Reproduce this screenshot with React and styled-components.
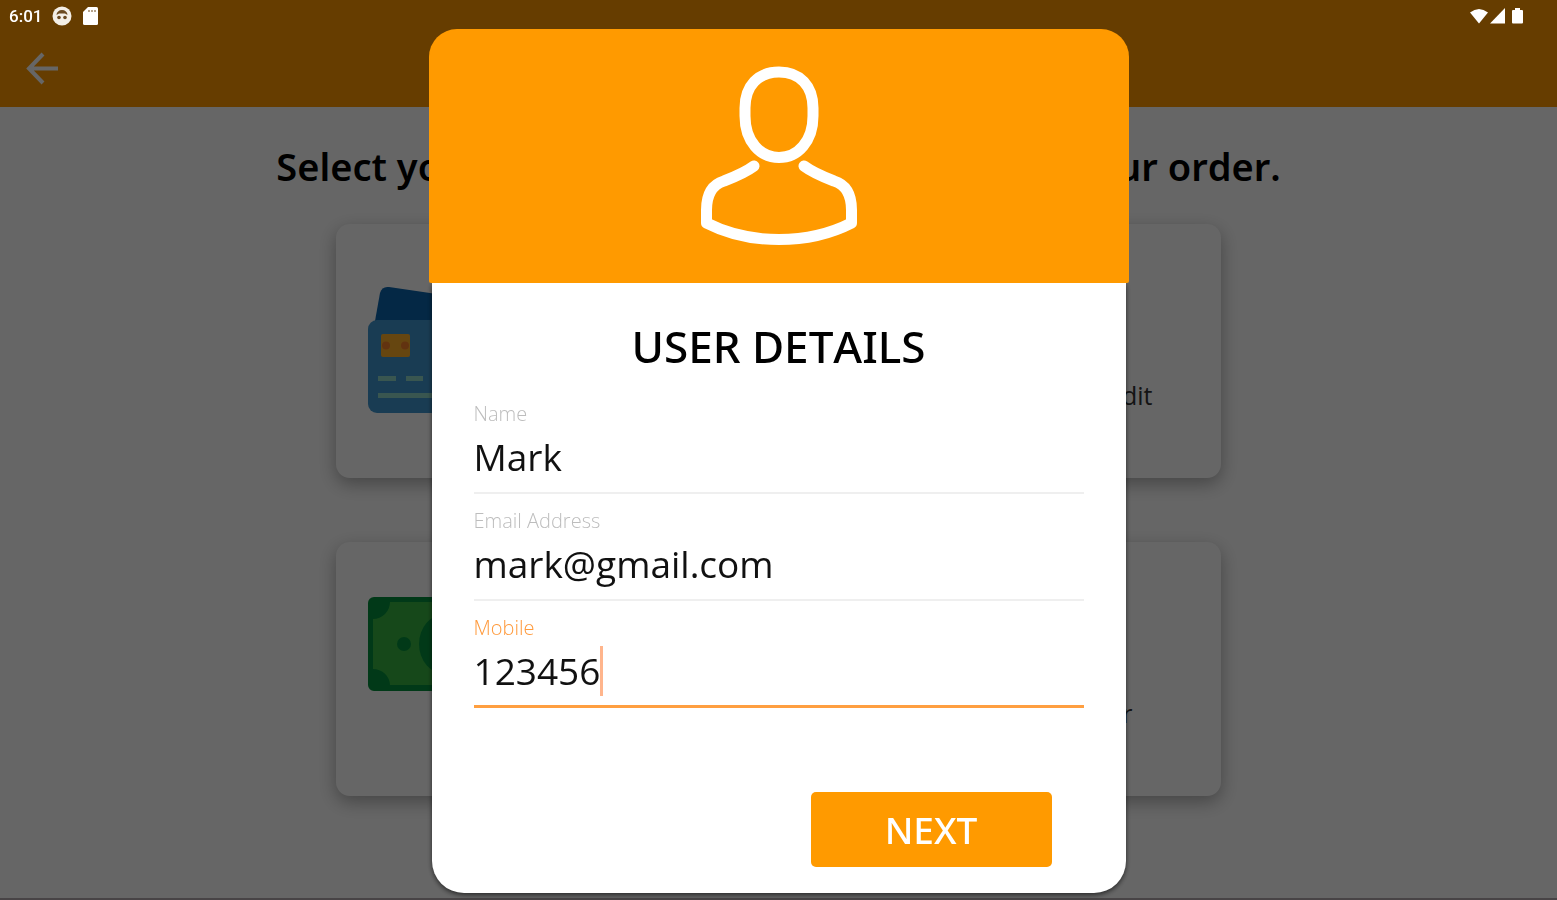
import React, { useState } from "react";
import styled, { createGlobalStyle, css } from "styled-components";

const GlobalStyle = createGlobalStyle`
  *, *::before, *::after { box-sizing: border-box; }
  body {
    margin: 0;
    background: #fff;
    color: #000;
    font-family: "Open Sans", "Noto Sans", sans-serif;
    font-kerning: none;
  }
`;

const brand = "#ff9a00";

const Page = styled.div`
  display: flex;
  flex-direction: column;
  min-height: 100vh;
  border-bottom: 2px solid #b4aaae;
`;

const Header = styled.header`
  background: ${brand};
`;

const StatusBar = styled.div`
  position: relative;
  z-index: 2;
  display: flex;
  align-items: center;
  justify-content: space-between;
  height: 31px;
  padding: 0 32px 0 9px;
  color: #fff;
`;

const StatusGroup = styled.div`
  display: flex;
  align-items: center;
  gap: ${(p) => p.$gap}px;
`;

const Clock = styled.span`
  font: 500 17px/20px Roboto, sans-serif;
`;

const AppBar = styled.div`
  display: flex;
  align-items: center;
  height: 76px;
  padding: 0 24px;
`;

const BackButton = styled.button`
  display: flex;
  padding: 0;
  border: 0;
  background: none;
  color: #fff;
`;

const Main = styled.main`
  display: flex;
  flex-direction: column;
  align-items: center;
  padding: 35px 24px 0;
`;

const Heading = styled.h1`
  margin: 0 0 34px;
  font-size: 38px;
  line-height: 48px;
  font-weight: 600;
  font-family: "Noto Sans", "Open Sans", sans-serif;
  text-align: center;
  white-space: nowrap;
`;

const Options = styled.div`
  display: flex;
  flex-direction: column;
  gap: 64px;
  width: 100%;
  max-width: 885px;
`;

const OptionCard = styled.article`
  display: flex;
  align-items: center;
  min-height: 254px;
  padding: 32px;
  border-radius: 14px;
  background: #fff;
  box-shadow: 0 6px 18px rgba(0, 0, 0, 0.32);
`;

const OptionText = styled.p`
  flex: 1;
  align-self: flex-end;
  margin: 0;
  padding-bottom: 35px;
  color: #333;
  font-size: 25px;
  line-height: 32px;
  text-align: center;
  white-space: nowrap;
`;

const Scrim = styled.div`
  position: fixed;
  inset: 0;
  z-index: 1;
  display: flex;
  align-items: flex-start;
  justify-content: center;
  padding-top: 29px;
  background: rgba(0, 0, 0, 0.6);
  overflow: auto;
`;

const Dialog = styled.section`
  display: flex;
  flex-direction: column;
  width: 100%;
  max-width: 700px;
`;

const DialogBanner = styled.div`
  position: relative;
  display: flex;
  justify-content: center;
  height: 254px;
  padding-top: 37px;
  border-radius: 28px 28px 2px 2px;
  background: ${brand};
`;

const DialogForm = styled.form`
  display: flex;
  flex-direction: column;
  margin: 0 3px;
  padding: 33px 42px 26px;
  border-radius: 0 0 32px 32px;
  background: #fff;
  box-shadow: 0 2px 5px rgba(0, 0, 0, 0.6);
`;

const DialogTitle = styled.h2`
  margin: 0 0 26px;
  font-size: 44px;
  line-height: 60px;
  font-weight: 500;
  font-family: "Noto Sans", "Open Sans", sans-serif;
  text-align: center;
`;

const Fields = styled.div`
  display: flex;
  flex-direction: column;
  gap: 15px;
`;

const Field = styled.div`
  display: flex;
  flex-direction: column;
`;

const FieldLabel = styled.label`
  color: ${(p) => (p.$active ? "#ff9a3c" : "#bdbdbd")};
  font-size: 20px;
  line-height: 24px;
  font-weight: 300;
`;

const InputWrap = styled.div`
  position: relative;
  font-size: 37px;
`;

const Input = styled.input`
  display: block;
  width: 100%;
  height: 68px;
  padding: 0 0 5px;
  border: 0;
  border-bottom: 2px solid #efefef;
  border-radius: 0;
  outline: 0;
  background: none;
  color: #111;
  caret-color: transparent;
  font: inherit;
  font-kerning: none;
  ${(p) =>
    p.$active &&
    css`
      border-bottom: 3px solid #ff9f40;
    `}
`;

const Caret = styled.span`
  position: absolute;
  top: 6px;
  left: ${(p) => p.$chars}ch;
  width: 3px;
  height: 50px;
  background: #ffb58c;
`;

const NextButton = styled.button`
  align-self: flex-end;
  width: 241px;
  height: 75px;
  margin: 84px 32px 0 0;
  padding: 0;
  border: 0;
  border-radius: 5px;
  background: ${brand};
  color: #fff;
  font: 500 37px/48px "Noto Sans", "Open Sans", sans-serif;
`;

const FaceIcon = () => (
  <svg width="20" height="20" viewBox="0 0 20 20" aria-hidden="true">
    <circle cx="10" cy="10" r="9.5" fill="#f4efe6" />
    <path d="M4.500 9A5.500 5 0 0 1 15.500 9L13 7.500H7Z" fill="#6b4a20" />
    <circle cx="7" cy="11.500" r="1.800" fill="#6b4a20" />
    <circle cx="13" cy="11.500" r="1.800" fill="#6b4a20" />
  </svg>
);

const StorageIcon = () => (
  <svg width="17" height="20" viewBox="0 0 17 20" aria-hidden="true">
    <path d="M6 1H14.500Q16 1 16 2.500V17.500Q16 19 14.500 19H2.500Q1 19 1 17.500V6Z" fill="#fff" />
    <path d="M7 4V6M10 4V6M13 4V6" stroke="#8f7350" strokeWidth="1.300" />
  </svg>
);

const SignalIcons = () => (
  <svg width="56" height="20" viewBox="0 0 56 20" fill="#fff" aria-hidden="true">
    <path d="M1 6.500Q10 -0.500 19 6.500L10 17.500Z" />
    <path d="M36 2V17.500H21Z" />
    <path d="M46 2H51V4H53Q54 4 54 5V16.500Q54 17.500 53 17.500H44Q43 17.500 43 16.500V5Q43 4 44 4H46Z" />
  </svg>
);

const ArrowIcon = () => (
  <svg width="36" height="36" viewBox="0 0 36 36" fill="none" stroke="currentColor" strokeWidth="4" aria-hidden="true">
    <path d="M34 17.500H5M19 3L5 17.500L19 32" />
  </svg>
);

const UserIcon = () => (
  <svg width="158" height="180" viewBox="0 0 158 180" fill="none" stroke="#fff" strokeWidth="11" strokeLinecap="round" strokeLinejoin="round" aria-hidden="true">
    <path d="M79 6C100 6 113 20 113 42V50C113 75 98 91.500 79 91.500C60 91.500 45 75 45 50V42C45 20 58 6 79 6Z" />
    <path d="M54 100C46 106 37 110 24 115C11 119 6.500 130 6.500 144V157C28 168 53 173.500 79 173.500S130 168 151.500 157V144C151.500 130 147 119 134 115C121 110 112 106 104 100" />
  </svg>
);

const CreditCardIcon = () => (
  <svg width="144" height="144" viewBox="0 0 144 144" aria-hidden="true">
    <path d="M7 42L12 14Q14 7 21 8L130 24Q136 25 136 32V60H7Z" fill="#0a64ac" />
    <rect y="41" width="144" height="93" rx="9" fill="#4097d0" />
    <rect x="13" y="55" width="29" height="23" rx="2" fill="#ffb02a" />
    <circle cx="18" cy="66.500" r="4" fill="#f5802a" />
    <circle cx="37" cy="66.500" r="4" fill="#f5802a" />
    <path d="M10 99.500H28M38 99.500H55M10 116.500H90" stroke="#8fd8c8" strokeWidth="5" />
  </svg>
);

const CashIcon = () => (
  <svg width="144" height="144" viewBox="0 0 144 144" aria-hidden="true">
    <rect width="144" height="94" rx="6" fill="#03903c" />
    <path d="M22 5H122A17 17 0 0 0 139 22V72A17 17 0 0 0 122 88H22A17 17 0 0 0 5 72V22A17 17 0 0 0 22 5Z" fill="#38b542" />
    <circle cx="36" cy="47" r="7" fill="#03903c" />
    <ellipse cx="77" cy="47" rx="26" ry="30" fill="#03903c" />
  </svg>
);

const options = [
  { id: "card", Icon: CreditCardIcon, text: "Pay with Visa or Mastercard, whether debit or credit" },
  { id: "cash", Icon: CashIcon, text: "Pay with cash when you collect from the counter" },
];

const fields = [
  { id: "name", label: "Name", type: "text" },
  { id: "email", label: "Email Address", type: "email" },
  { id: "mobile", label: "Mobile", type: "tel" },
];

export default function App() {
  const [values, setValues] = useState({ name: "Mark", email: "mark@gmail.com", mobile: "123456" });
  const [active, setActive] = useState("mobile");

  return (
    <>
      <GlobalStyle />
      <Page>
        <Header>
          <StatusBar>
            <StatusGroup $gap={10}>
              <Clock>6:01</Clock>
              <FaceIcon />
              <StorageIcon />
            </StatusGroup>
            <SignalIcons />
          </StatusBar>
          <AppBar>
            <BackButton type="button" aria-label="Back">
              <ArrowIcon />
            </BackButton>
          </AppBar>
        </Header>
        <Main>
          <Heading>Select your payment method then confirm your order.</Heading>
          <Options>
            {options.map(({ id, Icon, text }) => (
              <OptionCard key={id}>
                <Icon />
                <OptionText>{text}</OptionText>
              </OptionCard>
            ))}
          </Options>
        </Main>
      </Page>
      <Scrim>
        <Dialog role="dialog" aria-modal="true" aria-labelledby="dialog-title">
          <DialogBanner>
            <UserIcon />
          </DialogBanner>
          <DialogForm onSubmit={(e) => e.preventDefault()}>
            <DialogTitle id="dialog-title">USER DETAILS</DialogTitle>
            <Fields>
              {fields.map(({ id, label, type }) => (
                <Field key={id}>
                  <FieldLabel htmlFor={id} $active={active === id}>
                    {label}
                  </FieldLabel>
                  <InputWrap>
                    <Input
                      id={id}
                      type={type}
                      value={values[id]}
                      $active={active === id}
                      onFocus={() => setActive(id)}
                      onChange={(e) => setValues({ ...values, [id]: e.target.value })}
                    />
                    {id === "mobile" && active === id && <Caret $chars={values[id].length} />}
                  </InputWrap>
                </Field>
              ))}
            </Fields>
            <NextButton type="submit">NEXT</NextButton>
          </DialogForm>
        </Dialog>
      </Scrim>
    </>
  );
}
